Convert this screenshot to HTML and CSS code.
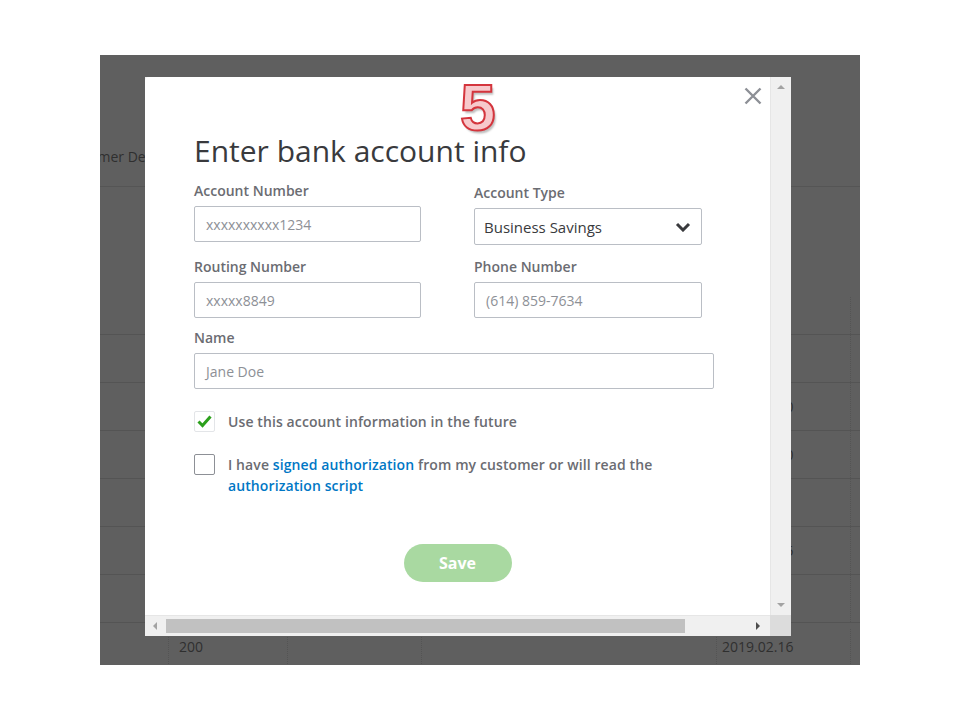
FILE: index.html
```html
<!DOCTYPE html>
<html lang="en">
<head>
    <meta charset="UTF-8">
    <title>Enter bank account info</title>
    <link rel="stylesheet" href="styles.css">
</head>
<body>
    <div class="shot">
        <div class="bg-top"><span class="bg-title">Customer Details</span></div>

        <div class="bg-table">
            <div class="bg-row bg-head">
                <div></div><div></div><div></div><div></div><div></div><div></div>
            </div>
            <div class="bg-row"><div></div><div>100</div><div></div><div></div><div>2019.02.11</div><div></div></div>
            <div class="bg-row"><div></div><div>150</div><div></div><div></div><div>2019.02.10</div><div></div></div>
            <div class="bg-row"><div></div><div>120</div><div></div><div></div><div>2019.02.10</div><div></div></div>
            <div class="bg-row"><div></div><div></div><div></div><div></div><div></div><div></div></div>
            <div class="bg-row"><div></div><div>80</div><div></div><div></div><div>2019.02.15</div><div></div></div>
            <div class="bg-row"><div></div><div></div><div></div><div></div><div></div><div></div></div>
            <div class="bg-row bg-last"><div></div><div>200</div><div></div><div></div><div>2019.02.16</div><div></div></div>
        </div>

        <div class="modal">
            <div class="modal-body">
                <span class="step">5</span>
                <svg class="close" width="18" height="18" viewBox="0 0 18 18">
                    <path d="M1.5 1.5 L16.5 16.5 M16.5 1.5 L1.5 16.5" stroke="#8d9096" stroke-width="2.4" fill="none"/>
                </svg>

                <h1>Enter bank account info</h1>

                <div class="form-grid">
                    <div class="field">
                        <label>Account Number</label>
                        <div class="input muted">xxxxxxxxxx1234</div>
                    </div>
                    <div class="field shifted">
                        <label>Account Type</label>
                        <div class="input select">
                            <span>Business Savings</span>
                            <svg width="16" height="10" viewBox="0 0 16 10">
                                <path d="M2 2 L8 8 L14 2" stroke="#393a3d" stroke-width="3" fill="none"/>
                            </svg>
                        </div>
                    </div>
                    <div class="field">
                        <label>Routing Number</label>
                        <div class="input muted">xxxxx8849</div>
                    </div>
                    <div class="field">
                        <label>Phone Number</label>
                        <div class="input muted">(614) 859-7634</div>
                    </div>
                </div>

                <div class="field name-field">
                    <label>Name</label>
                    <div class="input muted wide">Jane Doe</div>
                </div>

                <div class="check-row first">
                    <div class="box checked">
                        <svg width="19" height="19" viewBox="0 0 19 19">
                            <path d="M3.5 9.5 L7.5 13.5 L15.5 4.5" stroke="#2ca01c" stroke-width="3" fill="none"/>
                        </svg>
                    </div>
                    <p>Use this account information in the future</p>
                </div>

                <div class="check-row">
                    <div class="box"></div>
                    <p>I have <a>signed authorization</a> from my customer or will read the<br><a>authorization script</a></p>
                </div>

                <div class="actions">
                    <button>Save</button>
                </div>
            </div>

            <div class="vscroll">
                <span class="arrow up"></span>
                <span class="arrow down"></span>
            </div>
            <div class="hscroll">
                <span class="arrow left"></span>
                <div class="thumb"></div>
                <span class="arrow right"></span>
            </div>
            <div class="corner"></div>
        </div>
    </div>
</body>
</html>
```

FILE: styles.css
```css
body {
    margin: 0;
    background-color: #ffffff;
    font-family: "Open Sans", "Liberation Sans", sans-serif;
}
.shot {
    position: relative;
    width: 760px;
    height: 610px;
    margin: 55px 0 0 100px;
    background-color: #5f5f5f;
    overflow: hidden;
    color: #2f2f2f;
    font-size: 14px;
}

/* fondo: pagina atenuada detras del dialogo */
.bg-top {
    height: 132px;
    border-bottom: 1px solid #555555;
    padding-top: 94px;
    box-sizing: border-box;
    line-height: 16px;
}
.bg-title {
    display: inline-block;
    margin-left: -40px;
}
.bg-table {
    margin-top: 110px;
}
.bg-row {
    display: grid;
    grid-template-columns: 68px 119px 134px 295px 134px 10px;
    height: 48px;
    border-top: 1px solid #545454;
    box-sizing: border-box;
}
.bg-row > div {
    border-left: 1px dotted #545454;
    display: flex;
    align-items: center;
    padding-left: 10px;
}
.bg-row > div:nth-child(5) {
    padding-left: 5px;
}
.bg-row > div:first-child {
    border-left: none;
}
.bg-head {
    height: 37px;
    border-top: none;
}
.bg-head > div {
    border-left: none;
}
.bg-head > div:last-child {
    border-left: 1px dotted #545454;
}
.bg-last {
    height: 42px;
    padding-top: 6px;
}

/* dialogo */
.modal {
    position: absolute;
    left: 45px;
    top: 22px;
    display: grid;
    grid-template-columns: 625px 21px;
    grid-template-rows: 538px 21px;
    background-color: #f0f0f0;
}
.modal-body {
    position: relative;
    background-color: #ffffff;
    border-top-left-radius: 4px;
    padding: 56px 0 0 49px;
    box-sizing: border-box;
    color: #6b6c72;
}
.step {
    position: absolute;
    left: 315px;
    top: 6px;
    line-height: 50px;
    font-family: "Liberation Sans", sans-serif;
    font-weight: bold;
    font-size: 64px;
    color: #f7c9cc;
    -webkit-text-stroke: 2px #d4353d;
    text-shadow: 2px 3px 2px rgba(0, 0, 0, 0.25);
}
.close {
    position: absolute;
    right: 8px;
    top: 10px;
}
h1 {
    margin: 0 0 12px 0;
    font-size: 30px;
    line-height: 36px;
    font-weight: 500;
    color: #393a3d;
}
.form-grid {
    display: grid;
    grid-template-columns: 227px 228px;
    column-gap: 53px;
    row-gap: 14px;
}
.field label {
    display: block;
    font-size: 14px;
    font-weight: 600;
    line-height: 20px;
    margin-bottom: 5px;
}
.field.shifted {
    margin-top: 2px;
    margin-bottom: -2px;
}
.input {
    height: 36px;
    border: 1px solid #babec5;
    border-radius: 2px;
    box-sizing: border-box;
    display: flex;
    align-items: center;
    padding: 0 11px;
    font-size: 14px;
    color: #393a3d;
}
.input.muted {
    color: #8d9096;
}
.input.select {
    height: 37px;
    padding: 0 10px 0 9px;
    justify-content: space-between;
    font-size: 15px;
}
.name-field {
    margin-top: 10px;
}
.input.wide {
    width: 520px;
}
.check-row {
    display: flex;
    align-items: flex-start;
    gap: 13px;
    margin-top: 22px;
}
.check-row.first {
    align-items: center;
}
.check-row + .check-row {
    margin-top: 22px;
}
.box {
    width: 21px;
    height: 21px;
    border: 1px solid #8d9096;
    border-radius: 2px;
    box-sizing: border-box;
    flex-shrink: 0;
    display: flex;
    align-items: center;
    justify-content: center;
}
.box.checked {
    border-color: #e3e5e8;
}
.check-row p {
    margin: 0;
    font-size: 14px;
    font-weight: 600;
    line-height: 21px;
    letter-spacing: 0.1px;
}
.check-row a {
    color: #0077c5;
}
.actions {
    margin-top: 48px;
    padding-right: 49px;
    display: flex;
    justify-content: center;
}
button {
    width: 108px;
    height: 38px;
    border: none;
    border-radius: 19px;
    background-color: #a9d9a1;
    color: #ffffff;
    font-family: "Open Sans", "Liberation Sans", sans-serif;
    font-size: 16px;
    font-weight: 700;
}

/* barras de desplazamiento */
.vscroll {
    position: relative;
    background-color: #f0f0f0;
    border-left: 1px solid #e6e6e6;
}
.hscroll {
    display: flex;
    align-items: center;
    background-color: #f0f0f0;
    border-top: 1px solid #e6e6e6;
    padding: 0 6px;
}
.thumb {
    height: 14px;
    width: 519px;
    margin-left: 9px;
    background-color: #c1c1c1;
}
.arrow {
    width: 0;
    height: 0;
    border: 4px solid transparent;
}
.vscroll .arrow {
    position: absolute;
    left: 6px;
}
.arrow.up {
    top: 4px;
    border-bottom-color: #a3a3a3;
}
.arrow.down {
    bottom: 4px;
    border-top-color: #a3a3a3;
}
.arrow.left {
    border-right-color: #a3a3a3;
    margin-left: -2px;
}
.arrow.right {
    border-left-color: #4d4d4d;
    margin-left: 71px;
}
.corner {
    background-color: #dcdcdc;
}
```
